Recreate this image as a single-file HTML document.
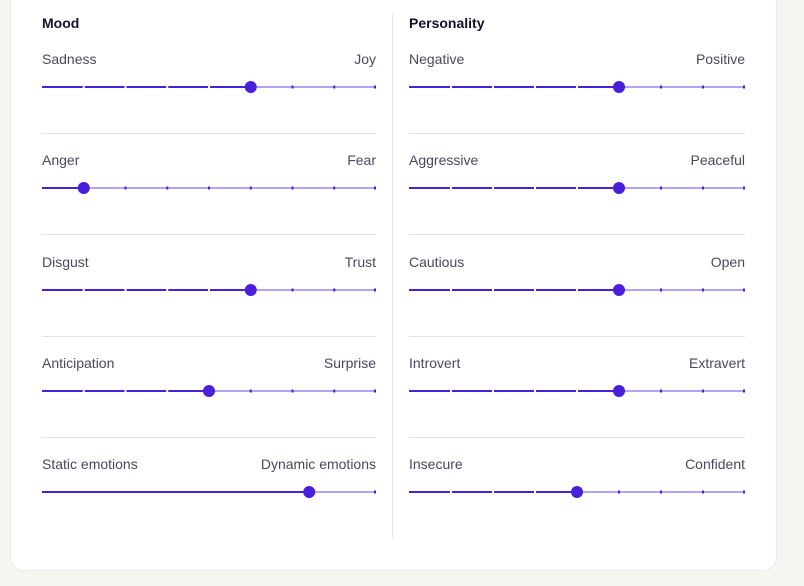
<!DOCTYPE html>
<html><head><meta charset="utf-8"><style>
html,body{margin:0;padding:0;width:804px;height:586px;overflow:hidden;background:#f6f5f1;font-family:"Liberation Sans",sans-serif;}
.card{position:absolute;left:10px;top:-20px;width:767px;height:591px;background:#fff;border:1px solid #ecebe8;border-radius:14px;box-sizing:border-box;}
.h{position:absolute;font-size:14px;font-weight:bold;color:#14122a;top:15px;}
.l{position:absolute;font-size:14px;color:#4a4860;}
.r{text-align:right;}
.div{position:absolute;height:1px;background:#e3e2e2;}
.vd{position:absolute;left:392px;top:14px;width:1px;height:524px;background:#e6e5e5;}
svg{position:absolute;overflow:visible;}
</style></head><body>
<div class="card"></div>
<div class="vd"></div>
<div class="h" style="left:42px">Mood</div>
<div class="h" style="left:409px">Personality</div>
<div id="c"></div>
<script>
var rows=[
[["Sadness","Joy",5],["Negative","Positive",5]],
[["Anger","Fear",1],["Aggressive","Peaceful",5]],
[["Disgust","Trust",5],["Cautious","Open",5]],
[["Anticipation","Surprise",4],["Introvert","Extravert",5]],
[["Static emotions","Dynamic emotions",-1],["Insecure","Confident",4]]];
var h='';
rows.forEach(function(row,i){
 var ly=51+i*101.3, ty=87+i*101.3;
 row.forEach(function(s,j){
  var x=j?409:42, w=j?336:334;
  h+='<div class="l" style="left:'+x+'px;top:'+ly+'px">'+s[0]+'</div>';
  h+='<div class="l r" style="left:'+x+'px;width:'+w+'px;top:'+ly+'px">'+s[1]+'</div>';
  if(i<4) h+='<div class="div" style="left:'+x+'px;width:'+w+'px;top:'+(133+i*101.3)+'px"></div>';
  var ty2=Math.round(ty);
  var p = s[2]<0 ? 0.8*w : s[2]*w/8;
  var sv='<svg style="left:'+x+'px;top:'+(ty2-7)+'px" width="'+w+'" height="14">';
  sv+='<line x1="0" y1="7" x2="'+w+'" y2="7" stroke="#b3a3f0" stroke-width="2"/>';
  sv+='<line x1="0" y1="7" x2="'+p+'" y2="7" stroke="#4a1fdc" stroke-width="2"/>';
  if(s[2]>=0){for(var k=1;k<8;k++){var tx=k*w/8;
    if(tx<p) sv+='<rect x="'+(tx-1)+'" y="5.5" width="2" height="3" fill="#fff"/>';
    else sv+='<rect x="'+(tx-1)+'" y="5.5" width="2" height="3" fill="#4a1fdc"/>';}}
  sv+='<rect x="'+(w-2)+'" y="5.5" width="2" height="3" fill="#4a1fdc"/>';
  sv+='<circle cx="'+p+'" cy="7" r="6" fill="#4a1fdc"/></svg>';
  h+=sv;
 });
});
document.getElementById('c').innerHTML=h;
</script>
</body></html>
